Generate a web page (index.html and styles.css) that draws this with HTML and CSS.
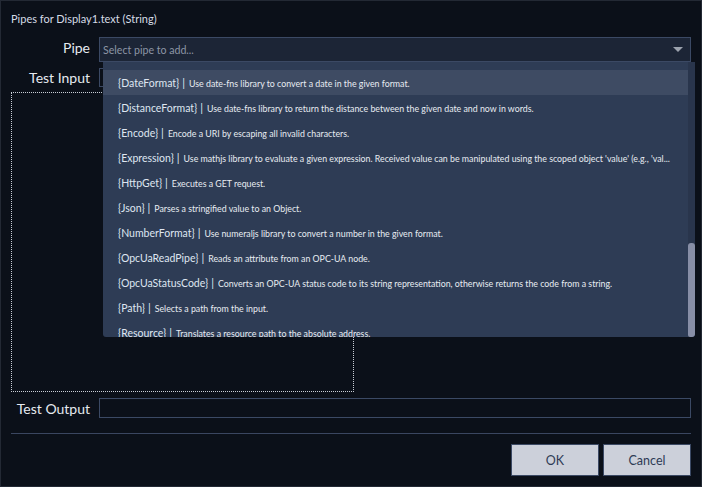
FILE: index.html
```html
<!DOCTYPE html>
<html>
<head>
<meta charset="utf-8">
<link rel="stylesheet" href="styles.css">
</head>
<body>
<div class="window">
  <div class="title">Pipes for Display1.text (String)</div>
  <div class="row row-pipe">
    <label class="lbl">Pipe</label>
    <div class="select">
      <span class="placeholder">Select pipe to add...</span>
      <span class="arrow"></span>
    </div>
  </div>
  <div class="row row-input">
    <label class="lbl">Test Input</label>
    <div class="field"></div>
  </div>
  <div class="area"></div>
  <div class="row row-output">
    <label class="lbl">Test Output</label>
    <div class="field"></div>
  </div>
  <div class="sep"></div>
  <div class="buttons">
    <button class="btn">OK</button>
    <button class="btn">Cancel</button>
  </div>

  <div class="menu">
    <ul class="items">
      <li class="item active"><span class="name">{DateFormat}</span><span class="bar">|</span><span class="desc">Use date-fns library to convert a date in the given format.</span></li>
      <li class="item"><span class="name">{DistanceFormat}</span><span class="bar">|</span><span class="desc">Use date-fns library to return the distance between the given date and now in words.</span></li>
      <li class="item"><span class="name">{Encode}</span><span class="bar">|</span><span class="desc">Encode a URI by escaping all invalid characters.</span></li>
      <li class="item"><span class="name">{Expression}</span><span class="bar">|</span><span class="desc">Use mathjs library to evaluate a given expression. Received value can be manipulated using the scoped object 'value' (e.g., 'val...</span></li>
      <li class="item"><span class="name">{HttpGet}</span><span class="bar">|</span><span class="desc">Executes a GET request.</span></li>
      <li class="item"><span class="name">{Json}</span><span class="bar">|</span><span class="desc">Parses a stringified value to an Object.</span></li>
      <li class="item"><span class="name">{NumberFormat}</span><span class="bar">|</span><span class="desc">Use numeraljs library to convert a number in the given format.</span></li>
      <li class="item"><span class="name">{OpcUaReadPipe}</span><span class="bar">|</span><span class="desc">Reads an attribute from an OPC-UA node.</span></li>
      <li class="item"><span class="name">{OpcUaStatusCode}</span><span class="bar">|</span><span class="desc">Converts an OPC-UA status code to its string representation, otherwise returns the code from a string.</span></li>
      <li class="item"><span class="name">{Path}</span><span class="bar">|</span><span class="desc">Selects a path from the input.</span></li>
      <li class="item"><span class="name">{Resource}</span><span class="bar">|</span><span class="desc">Translates a resource path to the absolute address.</span></li>
    </ul>
    <div class="scrollbar"><div class="thumb"></div></div>
  </div>
</div>
</body>
</html>
```
FILE: styles.css
```css
html, body {
  margin: 0;
  padding: 0;
  background: #0b1019;
}
body {
  font-family: Lato, "Open Sans", sans-serif;
  color: #dde3ec;
}
.window {
  position: relative;
  width: 702px;
  height: 487px;
  box-sizing: border-box;
  border: 1px solid #232934;
  padding: 0 10px 0 10px;
  display: flex;
  flex-direction: column;
  overflow: hidden;
}
.title {
  font-size: 11px;
  height: 18px;
  line-height: 18px;
  margin-top: 9px;
  color: #d6dce6;
}
.row {
  display: flex;
  align-items: stretch;
  gap: 9px;
}
.lbl {
  width: 79px;
  flex: none;
  white-space: nowrap;
  font-size: 14px;
  color: #e6eaf0;
  display: flex;
  align-items: center;
  justify-content: flex-end;
}
.row-pipe {
  margin-top: 9px;
  height: 25px;
}
.row-pipe .lbl {
  align-items: flex-start;
  padding-top: 2px;
}
.select {
  flex: 1;
  background: #1c2536;
  border: 1px solid #3b4964;
  display: flex;
  align-items: center;
  justify-content: space-between;
  padding: 0 7px 0 3px;
}
.placeholder {
  font-size: 10.6px;
  color: #8c95a5;
}
.arrow {
  width: 0;
  height: 0;
  border-left: 5px solid transparent;
  border-right: 5px solid transparent;
  border-top: 5px solid #9ba2ad;
}
.row-input {
  margin-top: 6px;
  height: 19px;
}
.field {
  flex: 1;
  border: 1px solid #3b4964;
  background: #0b1019;
}
.area {
  margin-top: 5px;
  width: 343px;
  height: 300px;
  box-sizing: border-box;
  border: 1px dotted #c9ced6;
}
.row-output {
  margin-top: 6px;
  height: 20px;
}
.sep {
  margin-top: 15px;
  height: 1px;
  background: #3a4660;
}
.buttons {
  margin-top: 10px;
  display: flex;
  justify-content: flex-end;
  gap: 4px;
}
.btn {
  width: 88px;
  height: 32px;
  box-sizing: border-box;
  background: #ccd0da;
  border: 1px solid #3b4964;
  color: #2e3b55;
  font-family: Lato, "Open Sans", sans-serif;
  font-size: 12.5px;
  padding: 0;
}
.menu {
  position: absolute;
  left: 102px;
  top: 61px;
  width: 592px;
  height: 275px;
  background: #2e3c55;
  border-radius: 0 0 3px 3px;
  overflow: hidden;
  display: flex;
}
.items {
  list-style: none;
  margin: 0;
  padding: 8px 0 0 0;
  flex: 1;
  min-width: 0;
}
.item {
  height: 25px;
  line-height: 22px;
  padding-left: 15px;
  padding-right: 8px;
  box-sizing: border-box;
  white-space: nowrap;
  overflow: hidden;
}
.item.active {
  background: #3e4b63;
}
.name {
  font-size: 10.5px;
  color: #dfe6f1;
}
.bar {
  font-size: 11px;
  color: #dfe6f1;
  margin: 0 4px 0 3px;
}
.desc {
  font-size: 8.8px;
  color: #e8ecf2;
}
.scrollbar {
  flex: none;
  width: 7px;
  background: #29354c;
  display: flex;
  flex-direction: column;
  justify-content: flex-end;
}
.thumb {
  height: 94px;
  background: #878ea6;
  border-radius: 3px 3px 2px 2px;
}
```
